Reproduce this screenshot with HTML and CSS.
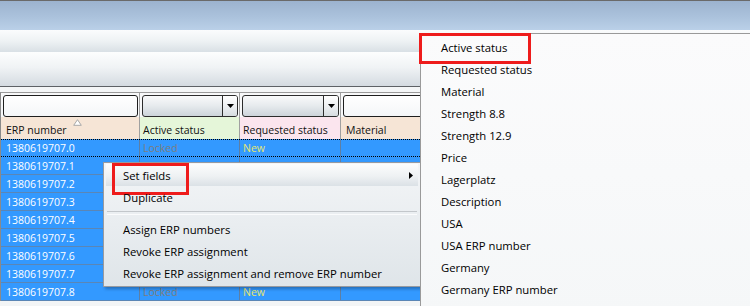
FILE: index.html
```html
<!DOCTYPE html>
<html>
<head>
<meta charset="utf-8">
<link rel="stylesheet" href="styles.css">
</head>
<body>
<div class="screen">
  <div class="topline"></div>
  <div class="band band-blue"></div>
  <div class="band band-tool1"></div>
  <div class="band band-tool2"></div>
  <div class="divider"></div>
  <div class="spacer"></div>

  <div class="grid">
    <div class="row filter-row">
      <div class="cell c1"><div class="textbox"></div></div>
      <div class="cell c2"><div class="combo"><span class="drop"><svg width="7" height="4" viewBox="0 0 7 4"><path d="M0 0H7L3.5 4Z" fill="#000"/></svg></span></div></div>
      <div class="cell c3"><div class="combo"><span class="drop"><svg width="7" height="4" viewBox="0 0 7 4"><path d="M0 0H7L3.5 4Z" fill="#000"/></svg></span></div></div>
      <div class="cell c4"><div class="textbox"></div></div>
    </div>
    <div class="row head-row">
      <div class="cell c1 peach">ERP number<svg class="sort" width="9" height="7" viewBox="0 0 9 7"><path d="M4.5 0.7L8.3 6.3H0.7Z" fill="#fff" stroke="#a8a8a8" stroke-width="1"/></svg></div>
      <div class="cell c2 green">Active status</div>
      <div class="cell c3 pink">Requested status</div>
      <div class="cell c4 peach">Material</div>
    </div>
    <div class="row data focus"><div class="cell c1">1380619707.0</div><div class="cell c2 st">Locked</div><div class="cell c3 rq">New</div><div class="cell c4"></div></div>
    <div class="row data"><div class="cell c1">1380619707.1</div><div class="cell c2"></div><div class="cell c3"></div><div class="cell c4"></div></div>
    <div class="row data"><div class="cell c1">1380619707.2</div><div class="cell c2"></div><div class="cell c3"></div><div class="cell c4"></div></div>
    <div class="row data"><div class="cell c1">1380619707.3</div><div class="cell c2"></div><div class="cell c3"></div><div class="cell c4"></div></div>
    <div class="row data"><div class="cell c1">1380619707.4</div><div class="cell c2"></div><div class="cell c3"></div><div class="cell c4"></div></div>
    <div class="row data"><div class="cell c1">1380619707.5</div><div class="cell c2"></div><div class="cell c3"></div><div class="cell c4"></div></div>
    <div class="row data"><div class="cell c1">1380619707.6</div><div class="cell c2"></div><div class="cell c3"></div><div class="cell c4"></div></div>
    <div class="row data"><div class="cell c1">1380619707.7</div><div class="cell c2"></div><div class="cell c3"></div><div class="cell c4"></div></div>
    <div class="row data"><div class="cell c1">1380619707.8</div><div class="cell c2 st">Locked</div><div class="cell c3 rq">New</div><div class="cell c4"></div></div>
  </div>

  <div class="ctx-menu">
    <div class="mi hot mark">Set fields<svg class="arrow" width="4" height="7" viewBox="0 0 4 7"><path d="M0 0L4 3.5L0 7Z" fill="#000"/></svg></div>
    <div class="mi">Duplicate</div>
    <div class="sep"></div>
    <div class="mi">Assign ERP numbers</div>
    <div class="mi">Revoke ERP assignment</div>
    <div class="mi">Revoke ERP assignment and remove ERP number</div>
  </div>

  <div class="sub-menu">
    <div class="si mark">Active status</div>
    <div class="si">Requested status</div>
    <div class="si">Material</div>
    <div class="si">Strength 8.8</div>
    <div class="si">Strength 12.9</div>
    <div class="si">Price</div>
    <div class="si">Lagerplatz</div>
    <div class="si">Description</div>
    <div class="si">USA</div>
    <div class="si">USA ERP number</div>
    <div class="si">Germany</div>
    <div class="si">Germany ERP number</div>
  </div>
</div>
</body>
</html>
```

FILE: styles.css
```css
* { box-sizing: border-box; }
html, body { margin: 0; padding: 0; }
body { width: 750px; height: 306px; overflow: hidden; background: #f3f5f6; font-family: "Open Sans", "Noto Sans", sans-serif; }
.screen { position: relative; width: 750px; height: 306px; overflow: hidden; }

.topline { height: 1px; background: #6a6a6a; }
.band { width: 100%; }
.band-blue { height: 29px; background: linear-gradient(#9cb3cf, #abc2dc 55%, #bad0e8); }
.band-tool1 { height: 22px; background: linear-gradient(#fbfcfd, #eef2f4 50%, #d9e0e5); }
.band-tool2 { height: 34px; background: linear-gradient(#fdfefe, #f0f3f5 45%, #d4dbe1); }
.divider { height: 1px; background: #5e6266; }
.spacer { height: 5px; background: #f4f6f7; }

.grid { border-top: 1px solid #9a9a9a; border-left: 1px solid #8a8a8a; width: 760px; background: #f4f6f7; }
.row { display: flex; }
.cell { flex: none; border-right: 1px solid #a0a0a0; overflow: visible; white-space: nowrap; }
.c1 { width: 139px; }
.c2 { width: 100px; }
.c3 { width: 101px; }
.c4 { width: 160px; }

.filter-row { height: 24px; background: #f7f8f9; }
.filter-row .cell { padding: 2px 1px 0 2px; }
.textbox { height: 22px; border: 1px solid #1e1e1e; border-radius: 3px; background: linear-gradient(#ffffff, #f4f6f8); }
.combo { height: 22px; border: 1px solid #2c2c2c; border-radius: 3px; background: linear-gradient(#f9fafb, #e6eaed 50%, #cdd4da); display: flex; justify-content: flex-end; }
.drop { width: 15px; height: 100%; border-left: 1px solid #2c2c2c; background: linear-gradient(#ffffff, #e9ecef 60%, #d6dce0); display: flex; align-items: center; justify-content: center; border-radius: 0 2px 2px 0; }

.head-row { height: 22px; font-size: 10.5px; color: #101010; }
.head-row .cell { position: relative; display: flex; align-items: flex-end; padding: 0 0 2px 5px; }
.head-row .c2, .head-row .c3 { padding-left: 3px; }
.peach { background: #f6e5d6; }
.green { background: #e5f6d9; }
.pink { background: #fbe5ee; }
.sort { position: absolute; left: 72px; top: 2px; }

.data { height: 18px; background: #3399ff; font-size: 10.5px; border-bottom: 1px solid #5b86b5; }
.data .cell { display: flex; align-items: center; border-right-color: #5e7fa3; padding-left: 5px; color: #ffffff; }
.data .c2, .data .c3 { padding-left: 3px; }
.data .st { color: #7d7d7d; }
.data .rq { color: #e6e66e; }
.focus { border-top: 1px dotted #000; border-bottom: 1px dotted #000; }

.ctx-menu { position: absolute; left: 103px; top: 162px; width: 318px; height: 125px; border: 1px solid #979aa0; background: linear-gradient(#f3f5f7, #e9edf0 50%, #dfe5e9); padding: 1px 2px 2px 2px; box-shadow: 2px 2px 3px rgba(0,0,0,0.28); font-size: 11.3px; color: #000; }
.mi { position: relative; height: 22px; display: flex; align-items: center; padding-left: 17px; }
.mi.hot { background: linear-gradient(#fcfdfd, #eef1f3 55%, #dbe1e6); }
.arrow { position: absolute; right: 5px; top: 8px; }
.sep { height: 10px; display: flex; align-items: center; margin: 0 1px; }
.sep::before { content: ""; display: block; width: 100%; height: 2px; border-top: 1px solid #c3c7cb; border-bottom: 1px solid #fafbfc; }

.sub-menu { position: absolute; left: 420px; top: 33px; width: 332px; height: 280px; border-left: 1px solid #9a9a9a; border-top: 1px solid #9a9a9a; background: linear-gradient(#fbfbfc, #f5f7f8); padding-top: 2px; font-size: 11.3px; color: #000; }
.si { position: relative; height: 22px; display: flex; align-items: center; padding-left: 20px; }

.mark::after { content: ""; position: absolute; border: 3px solid #ee1c1c; pointer-events: none; }
.mi.mark::after { left: 6px; top: -1px; width: 71px; height: 26px; }
.si.mark::after { left: -2px; top: -3px; width: 106px; height: 25px; }
```
